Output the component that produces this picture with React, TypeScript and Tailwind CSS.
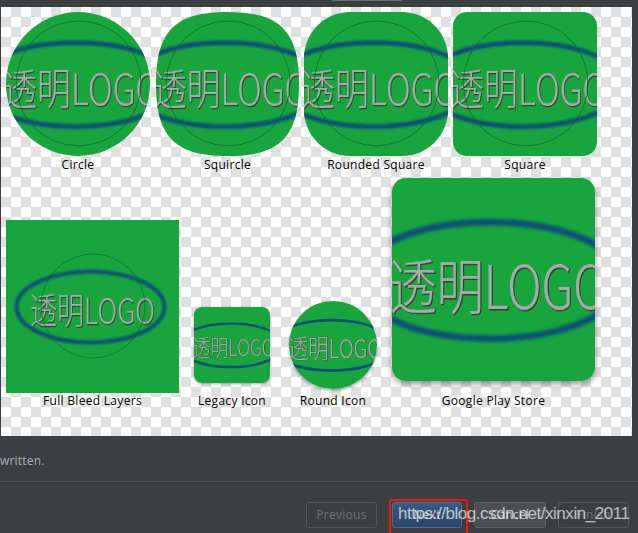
const FONT = '"Noto Sans CJK SC", "Noto Sans", sans-serif';

/** 预览图里的图层内容，坐标基于 173 的 full bleed 画布 */
function LogoLayer({ view, ring, rx, ry, textWidth }: { view: string; ring: boolean; rx: number; ry: number; textWidth: number }) {
  return (
    <svg viewBox={view} className="block h-full w-full" preserveAspectRatio="none">
      <defs>
        <filter id="soft" x="-10%" y="-30%" width="120%" height="160%">
          <feGaussianBlur stdDeviation="0.8" />
        </filter>
        <filter id="softText" x="-10%" y="-10%" width="120%" height="120%">
          <feGaussianBlur stdDeviation="0.2" />
        </filter>
      </defs>
      <rect x="-50" y="-50" width="273" height="273" fill="#19a53d" />
      <ellipse cx="84.5" cy="87" rx={rx} ry={ry} fill="none" stroke="#0b4f78" strokeWidth="4" filter="url(#soft)" />
      <g filter="url(#softText)" fontFamily={FONT} fontSize="36" fontWeight="300">
        <text x="24.6" y="104.6" textLength={textWidth} lengthAdjust="spacingAndGlyphs" fill="#2f4437" stroke="#2f4437" strokeWidth="0.5">透明LOGO</text>
        <text x="24" y="104" textLength={textWidth} lengthAdjust="spacingAndGlyphs" fill="#a3ada6" stroke="#a3ada6" strokeWidth="0.15">透明LOGO</text>
      </g>
      {ring && <circle cx="87" cy="86" r="52" fill="none" stroke="#0f5f2c" strokeWidth="0.6" />}
    </svg>
  );
}

function Tile({
  box,
  view = '26.5 26.5 120 120',
  ring = true,
  rx = 84,
  ry = 35,
  textWidth = 131,
}: {
  box: string;
  view?: string;
  ring?: boolean;
  rx?: number;
  ry?: number;
  textWidth?: number;
}) {
  return (
    <div className={box}>
      <LogoLayer view={view} ring={ring} rx={rx} ry={ry} textWidth={textWidth} />
    </div>
  );
}

function Label({ children, className }: { children: string; className: string }) {
  return <div className={'text-center text-[12px] leading-[16px] tracking-[0.3px] whitespace-nowrap text-black ' + className}>{children}</div>;
}

function FooterButton({ children, className = '' }: { children: React.ReactNode; className?: string }) {
  return (
    <div className={'flex h-[26px] items-center justify-center rounded-[3px] border text-[12px] tracking-[0.3px] ' + className}>
      {children}
    </div>
  );
}

export default function App() {
  return (
    <div className="flex h-[533px] w-[638px] flex-col overflow-hidden bg-[#3c3f41]" style={{ fontFamily: '"Open Sans", sans-serif' }}>
      {/* 顶部细条 */}
      <div className="flex h-[7px] shrink-0 pl-[332px]">
        <div className="h-px w-[70px] bg-[#6b6e70]" />
      </div>

      {/* 棋盘格预览区 */}
      <div className="ml-px h-[429px] w-[631px] shrink-0 bg-[repeating-conic-gradient(#e0e0e0_0_25%,#fff_0_50%)] bg-[length:20px_20px] px-[5px] pt-[5px]">
        <div className="flex">
          <div className="w-[144px]">
            <Tile box="h-[144px] w-[144px] overflow-hidden rounded-full" />
            <Label className="mt-px">Circle</Label>
          </div>
          <div className="ml-[6px] w-[143px]">
            <Tile box="h-[144px] w-[143px] overflow-hidden [clip-path:path('M71.5_0C124_0_143_19_143_72C143_125_124_144_71.5_144C19_144_0_125_0_72C0_19_19_0_71.5_0Z')]" />
            <Label className="mt-px">Squircle</Label>
          </div>
          <div className="ml-[5px] w-[144px]">
            <Tile box="h-[144px] w-[144px] overflow-hidden rounded-[46px]" />
            <Label className="mt-px">Rounded Square</Label>
          </div>
          <div className="ml-[5px] w-[144px]">
            <Tile box="h-[144px] w-[144px] overflow-hidden rounded-[14px]" />
            <Label className="mt-px">Square</Label>
          </div>
        </div>

        <div className="mt-[5px] flex items-end">
          <div className="w-[173px]">
            <Tile box="h-[173px] w-[173px]" view="0 0 173 173" rx={74} ry={35.5} textWidth={125} />
            <Label className="mt-0">Full Bleed Layers</Label>
          </div>
          <div className="ml-[15px] w-[76px]">
            <Tile box="h-[76px] w-[76px] overflow-hidden rounded-[8px] shadow-[0_1px_3px_rgba(0,0,0,0.35)]" view="25.5 25.5 122 122" ring={false} />
            <Label className="mt-[10px] -mx-4">Legacy Icon</Label>
          </div>
          <div className="ml-[19px] w-[88px]">
            <Tile box="h-[88px] w-[88px] overflow-hidden rounded-full shadow-[0_2px_3px_rgba(0,0,0,0.3)]" view="25.5 25.5 122 122" ring={false} />
            <Label className="mt-[4px]">Round Icon</Label>
          </div>
          <div className="ml-[15px] w-[203px]">
            <Tile box="h-[203px] w-[203px] overflow-hidden rounded-[14px] shadow-[0_3px_6px_rgba(0,0,0,0.4)]" view="25.5 25.5 122 122" ring={false} rx={80} />
            <Label className="mt-[12px]">Google Play Store</Label>
          </div>
        </div>
      </div>

      <div className="flex h-[46px] shrink-0 items-center border-b border-[#4d5052] pt-[5px] text-[12px] tracking-[0.2px] text-[#a9b0b6]">
        written.
      </div>

      {/* 底部按钮 */}
      <div className="relative flex flex-1 justify-end pr-[9px] pt-[20px]">
        <FooterButton className="w-[71px] border-[#55585a] text-[#6f7274]">Previous</FooterButton>
        <div className="relative ml-[15px]">
          <FooterButton className="w-[70px] border-[#4c708c] bg-[linear-gradient(#3a5a80,#2a4467)] text-[#bbbbbb]">Next</FooterButton>
          <div className="absolute -bottom-[4px] -left-[3px] -right-[6px] -top-[3px] rounded-[3px] border-[2px] border-[#f0190f]" />
        </div>
        <FooterButton className="ml-[12px] w-[72px] border-[#5e6163] bg-[#4c5052] text-[#bbbbbb]">Cancel</FooterButton>
        <FooterButton className="ml-[12px] w-[71px] border-[#55585a] text-[#6f7274]">Finish</FooterButton>
        <div className="absolute left-[398px] top-[19px] text-[17px] leading-[26px] tracking-[-0.45px] whitespace-nowrap text-white/65" style={{ fontFamily: '"Liberation Sans", sans-serif' }}>
          https://blog.csdn.net/xinxin_2011
        </div>
      </div>
    </div>
  );
}
